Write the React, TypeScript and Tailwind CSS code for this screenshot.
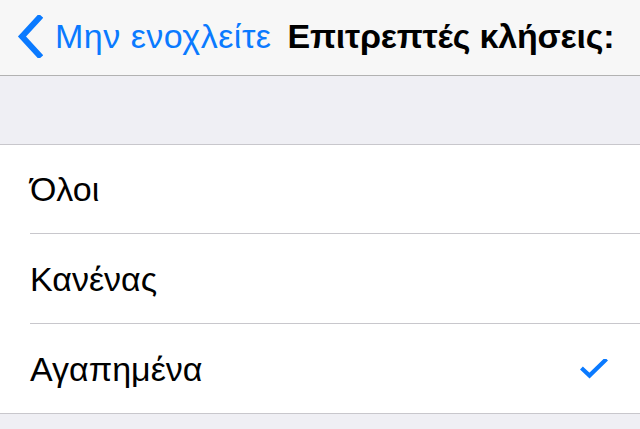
const options = [
  { label: 'Όλοι', selected: false, height: 'h-[89px]' },
  { label: 'Κανένας', selected: false, height: 'h-[90px]' },
  { label: 'Αγαπημένα', selected: true, height: 'h-[89px]' },
];

export default function App() {
  return (
    <div className="h-[429px] w-[640px] overflow-hidden bg-[#efeff4] font-['Liberation_Sans',Arial,sans-serif]">
      {/* Navigation bar */}
      <div className="flex h-[76px] items-center border-b border-[#b2b2b2] bg-[#f7f7f7] pb-[3px]">
        <button className="flex items-center pl-[17px] text-[#0a7aff]">
          <svg width="26" height="43" viewBox="0 0 26 43" className="mr-[12px]">
            <path d="M22 3 L5 21.5 L22 40" fill="none" stroke="#0a7aff" strokeWidth="6" strokeLinecap="square" />
          </svg>
          <span className="text-[34px] leading-none tracking-[0.5px]">Μην ενοχλείτε</span>
        </button>
        <div className="ml-[16px] text-[34px] font-bold leading-none tracking-[-0.2px] text-black">
          Επιτρεπτές κλήσεις:
        </div>
      </div>

      {/* Section spacer */}
      <div className="h-[69px] border-b border-[#c8c7cc]" />

      {/* Options */}
      <div className="border-b border-[#c8c7cc] bg-white">
        {options.map((option, index) => (
          <div key={option.label} className="pl-[30px]">
            <div
              className={`flex items-center pr-[31px] ${option.height} ${
                index < options.length - 1 ? 'border-b border-[#c8c7cc]' : ''
              }`}
            >
              <span className="flex-1 text-[34px] leading-none text-black">{option.label}</span>
              {option.selected && (
                <svg width="30" height="24" viewBox="0 0 30 24" className="mt-[4px]">
                  <path d="M4 10.5 L10.5 16.5 L26 1.5" fill="none" stroke="#0a7aff" strokeWidth="4.2" strokeLinecap="square" />
                </svg>
              )}
            </div>
          </div>
        ))}
      </div>
    </div>
  );
}
